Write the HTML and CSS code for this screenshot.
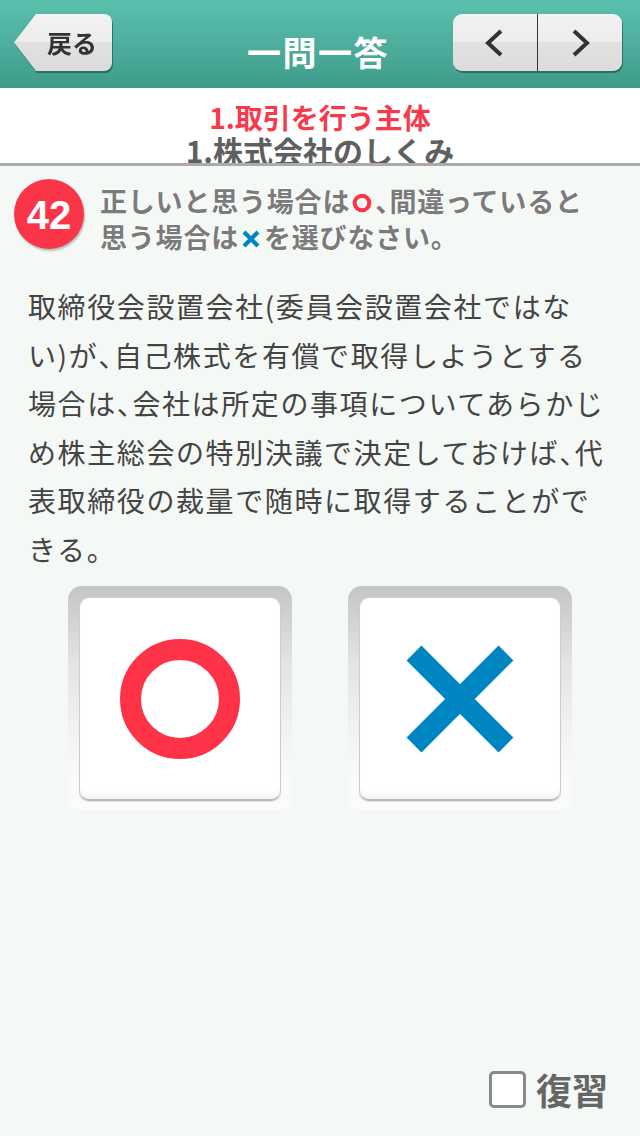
FILE: index.html
```html
<!DOCTYPE html>
<html lang="ja">
<head>
<meta charset="utf-8">
<title>一問一答</title>
<link rel="stylesheet" href="styles.css">
</head>
<body>
<div class="screen">
  <header class="topbar">
    <div class="back-wrap">
      <button class="back">戻る</button>
    </div>
    <h1 class="title">一問一答</h1>
    <div class="pager">
      <button class="pager-btn" aria-label="前へ">
        <svg width="20" height="28" viewBox="0 0 20 28"><path d="M16 2 L3 14 L16 26" fill="none" stroke="#333" stroke-width="4"/></svg>
      </button>
      <button class="pager-btn" aria-label="次へ">
        <svg width="20" height="28" viewBox="0 0 20 28"><path d="M4 2 L17 14 L4 26" fill="none" stroke="#333" stroke-width="4"/></svg>
      </button>
    </div>
  </header>

  <div class="crumbs">
    <div class="chapter">1.取引を行う主体</div>
    <div class="section">1.株式会社のしくみ</div>
  </div>

  <main class="content">
    <div class="prompt">
      <div class="badge">42</div>
      <p class="instr">正しいと思う場合は<svg class="mini" width="20" height="20" viewBox="0 0 20 20"><circle cx="10" cy="10" r="7.3" fill="none" stroke="#ff3347" stroke-width="4"/></svg><span class="p">、</span>間違っていると<br>思う場合は<svg class="mini" width="20" height="20" viewBox="0 0 20 20"><path d="M3 3 L17 17 M17 3 L3 17" stroke="#0085c3" stroke-width="4.2"/></svg>を選びなさい。</p>
    </div>

    <p class="question">取締役会設置会社(委員会設置会社ではな<br>い)が<span class="p">、</span>自己株式を有償で取得しようとする<br>場合は<span class="p">、</span>会社は所定の事項についてあらかじ<br>め株主総会の特別決議で決定しておけば<span class="p">、</span>代<br>表取締役の裁量で随時に取得することがで<br>きる。</p>

    <div class="answers">
      <button class="answer" aria-label="正しい">
        <span class="answer-face">
          <svg width="140" height="140" viewBox="0 0 140 140"><circle cx="70" cy="70" r="49.5" fill="none" stroke="#ff3347" stroke-width="21"/></svg>
        </span>
      </button>
      <button class="answer" aria-label="間違い">
        <span class="answer-face">
          <svg width="140" height="140" viewBox="0 0 140 140"><path d="M24 24 L116 116 M116 24 L24 116" stroke="#0085c3" stroke-width="21"/></svg>
        </span>
      </button>
    </div>

    <label class="review">
      <span class="checkbox"></span>
      <span class="review-label">復習</span>
    </label>
  </main>
</div>
</body>
</html>
```

FILE: styles.css
```css
* { box-sizing: border-box; }

html, body {
  margin: 0;
  padding: 0;
  width: 640px;
  height: 1136px;
}

body {
  font-family: "Noto Sans CJK JP", "Noto Sans", sans-serif;
  background: #f4f9f6;
  overflow: hidden;
}

.screen {
  display: flex;
  flex-direction: column;
  height: 1136px;
}

/* ---------- top bar ---------- */
.topbar {
  height: 88px;
  flex: none;
  display: grid;
  grid-template-columns: 1fr auto 1fr;
  align-items: start;
  padding: 14px 18px 0 14px;
  background: linear-gradient(#5ac0ae 0%, #4eae9d 50%, #3e9b8a 100%);
}

.back-wrap {
  justify-self: start;
  filter: drop-shadow(1px 2px 0.5px rgba(20, 70, 60, 0.55));
}

.back {
  display: block;
  width: 98px;
  height: 57px;
  border: 0;
  padding: 0 0 0 18px;
  border-radius: 0 8px 8px 0;
  clip-path: polygon(22px 0, 100% 0, 100% 100%, 22px 100%, 0 50%);
  background: linear-gradient(#f3f3f3 0%, #ececec 50%, #e1e1e1 50%, #dbdbdb 100%);
  font-family: inherit;
  font-size: 25px;
  font-weight: 700;
  color: #333;
  line-height: 57px;
  text-align: center;
}

.title {
  margin: 0;
  padding-top: 14px;
  font-size: 34px;
  font-weight: 700;
  color: #fff;
  line-height: 48px;
  letter-spacing: 1.5px;
}

.pager {
  justify-self: end;
  display: flex;
  width: 169px;
  height: 57px;
  border-radius: 9px;
  overflow: hidden;
  background: linear-gradient(#f2f2f2 0%, #ececec 50%, #e1e1e1 50%, #dcdcdc 100%);
  box-shadow: 1px 2px 0.5px rgba(20, 70, 60, 0.55);
}

.pager-btn {
  flex: 1;
  border: 0;
  padding: 0;
  background: transparent;
  display: flex;
  align-items: center;
  justify-content: center;
}

.pager-btn + .pager-btn {
  border-left: 1px solid #333;
}

/* ---------- breadcrumbs ---------- */
.crumbs {
  flex: none;
  height: 78px;
  background: #fff;
  border-bottom: 3px solid #ababab;
  overflow: hidden;
  display: flex;
  flex-direction: column;
  align-items: center;
  font-weight: 700;
}

.chapter {
  margin-top: 14px;
  font-size: 28px;
  line-height: 30px;
  color: #f73a4b;
}

.section {
  font-size: 30px;
  line-height: 36px;
  color: #5f5f5f;
}

/* ---------- content ---------- */
.content {
  flex: 1;
  display: flex;
  flex-direction: column;
  padding-bottom: 27px;
}

.p {
  font-feature-settings: "halt";
}

.prompt {
  display: flex;
  align-items: flex-start;
  padding: 13px 0 0 14px;
}

.badge {
  flex: none;
  width: 70px;
  height: 70px;
  border-radius: 50%;
  background: #fb3548;
  box-shadow: 1px 2px 2px rgba(0, 0, 0, 0.25);
  color: #fff;
  font-family: "Liberation Sans", Arial, sans-serif;
  font-weight: 700;
  font-size: 40px;
  line-height: 72px;
  text-align: center;
}

.instr {
  margin: 4px 0 0 16px;
  font-size: 27px;
  font-weight: 700;
  line-height: 36px;
  letter-spacing: 0.8px;
  color: #7b7b7b;
  white-space: nowrap;
  text-shadow: 0 0 2px #fff, 0 0 2px #fff, 0 0 3px #fff;
}

.mini {
  vertical-align: -1px;
  margin: 0 3px 0 2px;
}

.question {
  margin: 27px 0 0 28px;
  font-size: 28px;
  line-height: 48.5px;
  letter-spacing: 1.6px;
  color: #444;
  white-space: nowrap;
}

.answers {
  display: flex;
  justify-content: center;
  gap: 56px;
  margin-top: 13px;
}

.answer {
  width: 224px;
  height: 224px;
  padding: 11px 11px 9px;
  border: 0;
  border-radius: 14px;
  background: linear-gradient(#c5c5c5 0%, #e4e4e4 35%, #f6f6f6 75%, #fcfcfc 100%);
  display: flex;
}

.answer-face {
  flex: 1;
  display: flex;
  align-items: center;
  justify-content: center;
  background: #fff;
  border: 1px solid #cdcdcd;
  border-bottom: 2px solid #bcbcbc;
  border-radius: 10px;
  box-shadow: inset 0 -8px 8px -6px rgba(0, 0, 0, 0.08), 0 1px 1px rgba(0, 0, 0, 0.1);
}

.review {
  margin-top: auto;
  align-self: flex-end;
  margin-right: 32px;
  display: flex;
  align-items: center;
  gap: 10px;
}

.checkbox {
  width: 37px;
  height: 37px;
  border: 3px solid #8a8a8a;
  border-radius: 5px;
  background: #fff;
}

.review-label {
  font-size: 36px;
  font-weight: 700;
  color: #666;
  line-height: 40px;
}
```
